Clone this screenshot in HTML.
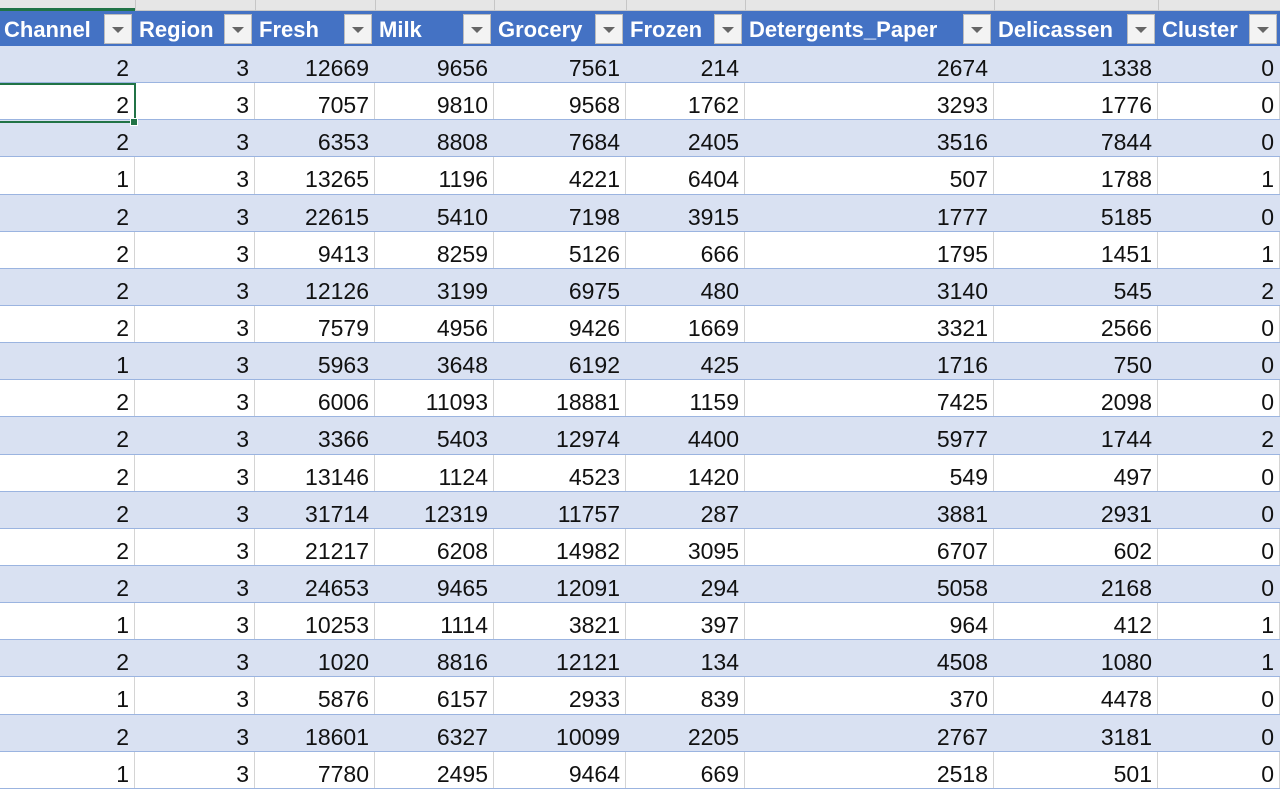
<!DOCTYPE html>
<html><head><meta charset="utf-8"><style>
*{margin:0;padding:0;box-sizing:border-box}
body{width:1280px;height:787px;overflow:hidden;background:#fff;font-family:"Liberation Sans",Arial,sans-serif;position:relative}
.top{position:absolute;left:0;top:0;width:1280px;height:11px;background:#e6e6e6;border-bottom:1px solid #c8c8c8}
.top i{position:absolute;top:0;height:11px;width:1px;background:#c6c6c6}
.hdr{position:absolute;left:0;top:11px;height:35px;width:1280px;background:#4472c4;display:flex}
.hdr div{position:relative;color:#fff;font-size:22px;font-weight:bold;line-height:38px;padding-left:4px;white-space:nowrap;overflow:hidden}
.hdr b{position:absolute;right:3px;top:3px;width:28px;height:30px;background:#f3f3f3;border:1px solid #bcbcbc}
.hdr b:after{content:"";position:absolute;left:7px;top:12px;border-left:6px solid transparent;border-right:6px solid transparent;border-top:6px solid #666}
.rows{position:absolute;left:0;top:46px;width:1280px}
.r{display:flex;height:37.15px;border-bottom:1px solid #9bb4e0}
.r div{text-align:right;padding-right:5px;font-size:23px;line-height:37px;color:#111;border-right:1px solid #d4d4d4}
.r div span{position:relative;top:4px}
.r.b{background:#d9e1f2}
.r.b div{border-right-color:transparent}
.c1{width:135px}.c2{width:120px}.c3{width:120px}.c4{width:119px}.c5{width:132px}.c6{width:119px}.c7{width:249px}.c8{width:164px}.c9{width:122px}
.sel{position:absolute;left:-3px;top:83px;width:139px;height:40px;border:2px solid #217346}
.hnd{position:absolute;left:130px;top:118px;width:8px;height:8px;background:#217346;border:1px solid #fff}
.tl{position:absolute;left:0;top:8px;width:135px;height:3px;background:#217346}
</style></head><body>
<div class="top"><i style="left:135px"></i><i style="left:255px"></i><i style="left:375px"></i><i style="left:494px"></i><i style="left:626px"></i><i style="left:745px"></i><i style="left:994px"></i><i style="left:1158px"></i></div>
<div class="tl"></div>
<div class="hdr">
<div style="width:135px">Channel<b></b></div>
<div style="width:120px">Region<b></b></div>
<div style="width:120px">Fresh<b></b></div>
<div style="width:119px">Milk<b></b></div>
<div style="width:132px">Grocery<b></b></div>
<div style="width:119px">Frozen<b></b></div>
<div style="width:249px">Detergents_Paper<b></b></div>
<div style="width:164px">Delicassen<b></b></div>
<div style="width:122px">Cluster<b></b></div>
</div>
<div class="rows">
<div class="r b"><div class="c1"><span>2</span></div><div class="c2"><span>3</span></div><div class="c3"><span>12669</span></div><div class="c4"><span>9656</span></div><div class="c5"><span>7561</span></div><div class="c6"><span>214</span></div><div class="c7"><span>2674</span></div><div class="c8"><span>1338</span></div><div class="c9"><span>0</span></div></div>
<div class="r"><div class="c1"><span>2</span></div><div class="c2"><span>3</span></div><div class="c3"><span>7057</span></div><div class="c4"><span>9810</span></div><div class="c5"><span>9568</span></div><div class="c6"><span>1762</span></div><div class="c7"><span>3293</span></div><div class="c8"><span>1776</span></div><div class="c9"><span>0</span></div></div>
<div class="r b"><div class="c1"><span>2</span></div><div class="c2"><span>3</span></div><div class="c3"><span>6353</span></div><div class="c4"><span>8808</span></div><div class="c5"><span>7684</span></div><div class="c6"><span>2405</span></div><div class="c7"><span>3516</span></div><div class="c8"><span>7844</span></div><div class="c9"><span>0</span></div></div>
<div class="r"><div class="c1"><span>1</span></div><div class="c2"><span>3</span></div><div class="c3"><span>13265</span></div><div class="c4"><span>1196</span></div><div class="c5"><span>4221</span></div><div class="c6"><span>6404</span></div><div class="c7"><span>507</span></div><div class="c8"><span>1788</span></div><div class="c9"><span>1</span></div></div>
<div class="r b"><div class="c1"><span>2</span></div><div class="c2"><span>3</span></div><div class="c3"><span>22615</span></div><div class="c4"><span>5410</span></div><div class="c5"><span>7198</span></div><div class="c6"><span>3915</span></div><div class="c7"><span>1777</span></div><div class="c8"><span>5185</span></div><div class="c9"><span>0</span></div></div>
<div class="r"><div class="c1"><span>2</span></div><div class="c2"><span>3</span></div><div class="c3"><span>9413</span></div><div class="c4"><span>8259</span></div><div class="c5"><span>5126</span></div><div class="c6"><span>666</span></div><div class="c7"><span>1795</span></div><div class="c8"><span>1451</span></div><div class="c9"><span>1</span></div></div>
<div class="r b"><div class="c1"><span>2</span></div><div class="c2"><span>3</span></div><div class="c3"><span>12126</span></div><div class="c4"><span>3199</span></div><div class="c5"><span>6975</span></div><div class="c6"><span>480</span></div><div class="c7"><span>3140</span></div><div class="c8"><span>545</span></div><div class="c9"><span>2</span></div></div>
<div class="r"><div class="c1"><span>2</span></div><div class="c2"><span>3</span></div><div class="c3"><span>7579</span></div><div class="c4"><span>4956</span></div><div class="c5"><span>9426</span></div><div class="c6"><span>1669</span></div><div class="c7"><span>3321</span></div><div class="c8"><span>2566</span></div><div class="c9"><span>0</span></div></div>
<div class="r b"><div class="c1"><span>1</span></div><div class="c2"><span>3</span></div><div class="c3"><span>5963</span></div><div class="c4"><span>3648</span></div><div class="c5"><span>6192</span></div><div class="c6"><span>425</span></div><div class="c7"><span>1716</span></div><div class="c8"><span>750</span></div><div class="c9"><span>0</span></div></div>
<div class="r"><div class="c1"><span>2</span></div><div class="c2"><span>3</span></div><div class="c3"><span>6006</span></div><div class="c4"><span>11093</span></div><div class="c5"><span>18881</span></div><div class="c6"><span>1159</span></div><div class="c7"><span>7425</span></div><div class="c8"><span>2098</span></div><div class="c9"><span>0</span></div></div>
<div class="r b"><div class="c1"><span>2</span></div><div class="c2"><span>3</span></div><div class="c3"><span>3366</span></div><div class="c4"><span>5403</span></div><div class="c5"><span>12974</span></div><div class="c6"><span>4400</span></div><div class="c7"><span>5977</span></div><div class="c8"><span>1744</span></div><div class="c9"><span>2</span></div></div>
<div class="r"><div class="c1"><span>2</span></div><div class="c2"><span>3</span></div><div class="c3"><span>13146</span></div><div class="c4"><span>1124</span></div><div class="c5"><span>4523</span></div><div class="c6"><span>1420</span></div><div class="c7"><span>549</span></div><div class="c8"><span>497</span></div><div class="c9"><span>0</span></div></div>
<div class="r b"><div class="c1"><span>2</span></div><div class="c2"><span>3</span></div><div class="c3"><span>31714</span></div><div class="c4"><span>12319</span></div><div class="c5"><span>11757</span></div><div class="c6"><span>287</span></div><div class="c7"><span>3881</span></div><div class="c8"><span>2931</span></div><div class="c9"><span>0</span></div></div>
<div class="r"><div class="c1"><span>2</span></div><div class="c2"><span>3</span></div><div class="c3"><span>21217</span></div><div class="c4"><span>6208</span></div><div class="c5"><span>14982</span></div><div class="c6"><span>3095</span></div><div class="c7"><span>6707</span></div><div class="c8"><span>602</span></div><div class="c9"><span>0</span></div></div>
<div class="r b"><div class="c1"><span>2</span></div><div class="c2"><span>3</span></div><div class="c3"><span>24653</span></div><div class="c4"><span>9465</span></div><div class="c5"><span>12091</span></div><div class="c6"><span>294</span></div><div class="c7"><span>5058</span></div><div class="c8"><span>2168</span></div><div class="c9"><span>0</span></div></div>
<div class="r"><div class="c1"><span>1</span></div><div class="c2"><span>3</span></div><div class="c3"><span>10253</span></div><div class="c4"><span>1114</span></div><div class="c5"><span>3821</span></div><div class="c6"><span>397</span></div><div class="c7"><span>964</span></div><div class="c8"><span>412</span></div><div class="c9"><span>1</span></div></div>
<div class="r b"><div class="c1"><span>2</span></div><div class="c2"><span>3</span></div><div class="c3"><span>1020</span></div><div class="c4"><span>8816</span></div><div class="c5"><span>12121</span></div><div class="c6"><span>134</span></div><div class="c7"><span>4508</span></div><div class="c8"><span>1080</span></div><div class="c9"><span>1</span></div></div>
<div class="r"><div class="c1"><span>1</span></div><div class="c2"><span>3</span></div><div class="c3"><span>5876</span></div><div class="c4"><span>6157</span></div><div class="c5"><span>2933</span></div><div class="c6"><span>839</span></div><div class="c7"><span>370</span></div><div class="c8"><span>4478</span></div><div class="c9"><span>0</span></div></div>
<div class="r b"><div class="c1"><span>2</span></div><div class="c2"><span>3</span></div><div class="c3"><span>18601</span></div><div class="c4"><span>6327</span></div><div class="c5"><span>10099</span></div><div class="c6"><span>2205</span></div><div class="c7"><span>2767</span></div><div class="c8"><span>3181</span></div><div class="c9"><span>0</span></div></div>
<div class="r"><div class="c1"><span>1</span></div><div class="c2"><span>3</span></div><div class="c3"><span>7780</span></div><div class="c4"><span>2495</span></div><div class="c5"><span>9464</span></div><div class="c6"><span>669</span></div><div class="c7"><span>2518</span></div><div class="c8"><span>501</span></div><div class="c9"><span>0</span></div></div>
</div>
<div class="sel"></div><div class="hnd"></div>
</body></html>
